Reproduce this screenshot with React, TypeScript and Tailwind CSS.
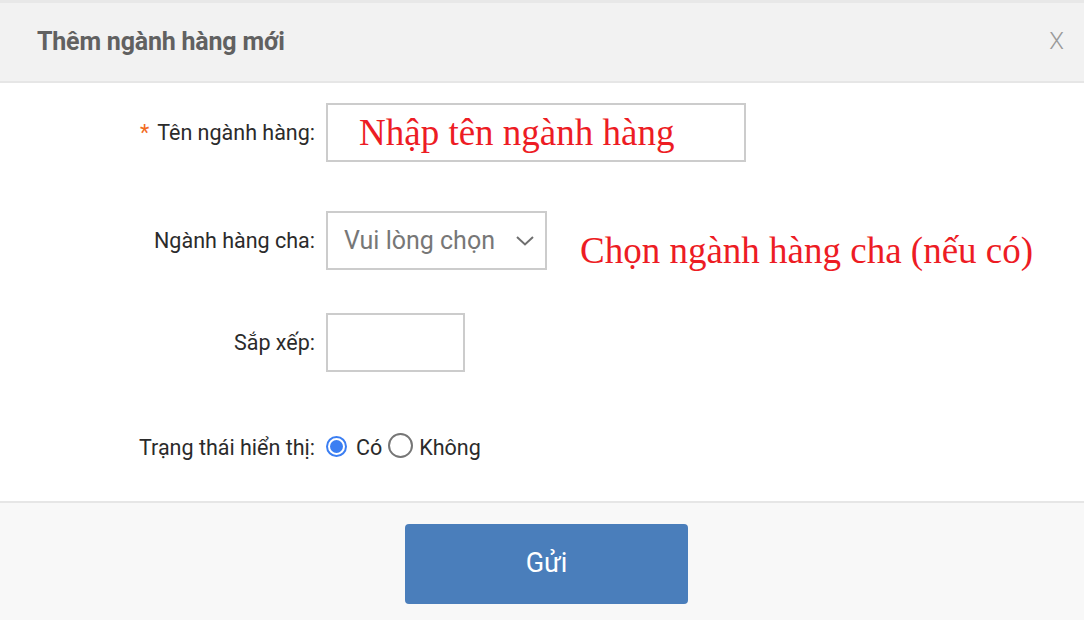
import React from "react";

export default function App() {
  return (
    <div className="w-[1084px] h-[620px] bg-white flex flex-col overflow-hidden" style={{ fontFamily: "Roboto, 'Noto Sans', sans-serif" }}>
      {/* header */}
      <div className="h-[83px] bg-[#f2f2f2] border-t-[3px] border-t-[#e8e8e8] border-b-2 border-b-[#e6e6e6] flex items-center justify-between pl-[37px] pr-[20px]">
        <h1 className="text-[25px] font-bold text-[#616161] tracking-[-0.2px]">Thêm ngành hàng mới</h1>
        <button className="text-[24px] font-light text-[#9a9a9a] leading-none pb-[2px]">X</button>
      </div>

      {/* body */}
      <div className="flex-1 flex flex-col pt-[20px] text-[21.5px] text-[#2b2b2b]">
        <div className="flex items-center h-[59px]">
          <label className="w-[315px] text-right pt-[2px]">
            <span className="text-[#f26b21] mr-[8px]">*</span>Tên ngành hàng:
          </label>
          <div className="ml-[11px] w-[420px] h-[59px] border-2 border-[#cccccc] flex items-center pl-[31px]">
            <span className="text-[37px] text-[#ed1c24] leading-none" style={{ fontFamily: "'Liberation Serif', 'Times New Roman', serif" }}>Nhập tên ngành hàng</span>
          </div>
        </div>

        <div className="flex items-center h-[59px] mt-[49px]">
          <label className="w-[315px] text-right pt-[1px]">Ngành hàng cha:</label>
          <div className="ml-[11px] w-[221px] h-[59px] border-2 border-[#cccccc] flex items-center justify-between pl-[16px] pr-[8px]">
            <span className="text-[25px] text-[#777777]">Vui lòng chọn</span>
            <svg width="20" height="12" viewBox="0 0 20 12" fill="none" className="mr-[2px]">
              <path d="M2 2 L10 9.5 L18 2" stroke="#6f6f6f" strokeWidth="2" />
            </svg>
          </div>
          <span className="ml-[33px] mt-[20px] text-[37px] text-[#ed1c24] leading-none" style={{ fontFamily: "'Liberation Serif', 'Times New Roman', serif" }}>Chọn ngành hàng cha (nếu có)</span>
        </div>

        <div className="flex items-center h-[59px] mt-[43px]">
          <label className="w-[315px] text-right pt-[1px]">Sắp xếp:</label>
          <div className="ml-[11px] w-[139px] h-[59px] border-2 border-[#cccccc]" />
        </div>

        <div className="flex items-center h-[59px] mt-[46px]">
          <label className="w-[315px] text-right pt-[1px]">Trạng thái hiển thị:</label>
          <div className="ml-[11px] flex items-center pt-[1px]">
            <span className="w-[21px] h-[21px] rounded-full border-2 border-[#3b7ef2] flex items-center justify-center mt-[-3px]">
              <span className="w-[13px] h-[13px] rounded-full bg-[#3b7ef2]" />
            </span>
            <span className="ml-[9px]">Có</span>
            <span className="ml-[6px] w-[25px] h-[25px] rounded-full border-2 border-[#767676] mt-[-5px]" />
            <span className="ml-[6px]">Không</span>
          </div>
        </div>
      </div>

      {/* footer */}
      <div className="h-[119px] bg-[#f8f8f8] border-t-2 border-t-[#e6e6e6] flex justify-center pt-[21px]">
        <button className="ml-[9px] w-[283px] h-[80px] rounded-[4px] bg-[#4a7ebb] text-white text-[27px] pb-[2px]">Gửi</button>
      </div>
    </div>
  );
}
